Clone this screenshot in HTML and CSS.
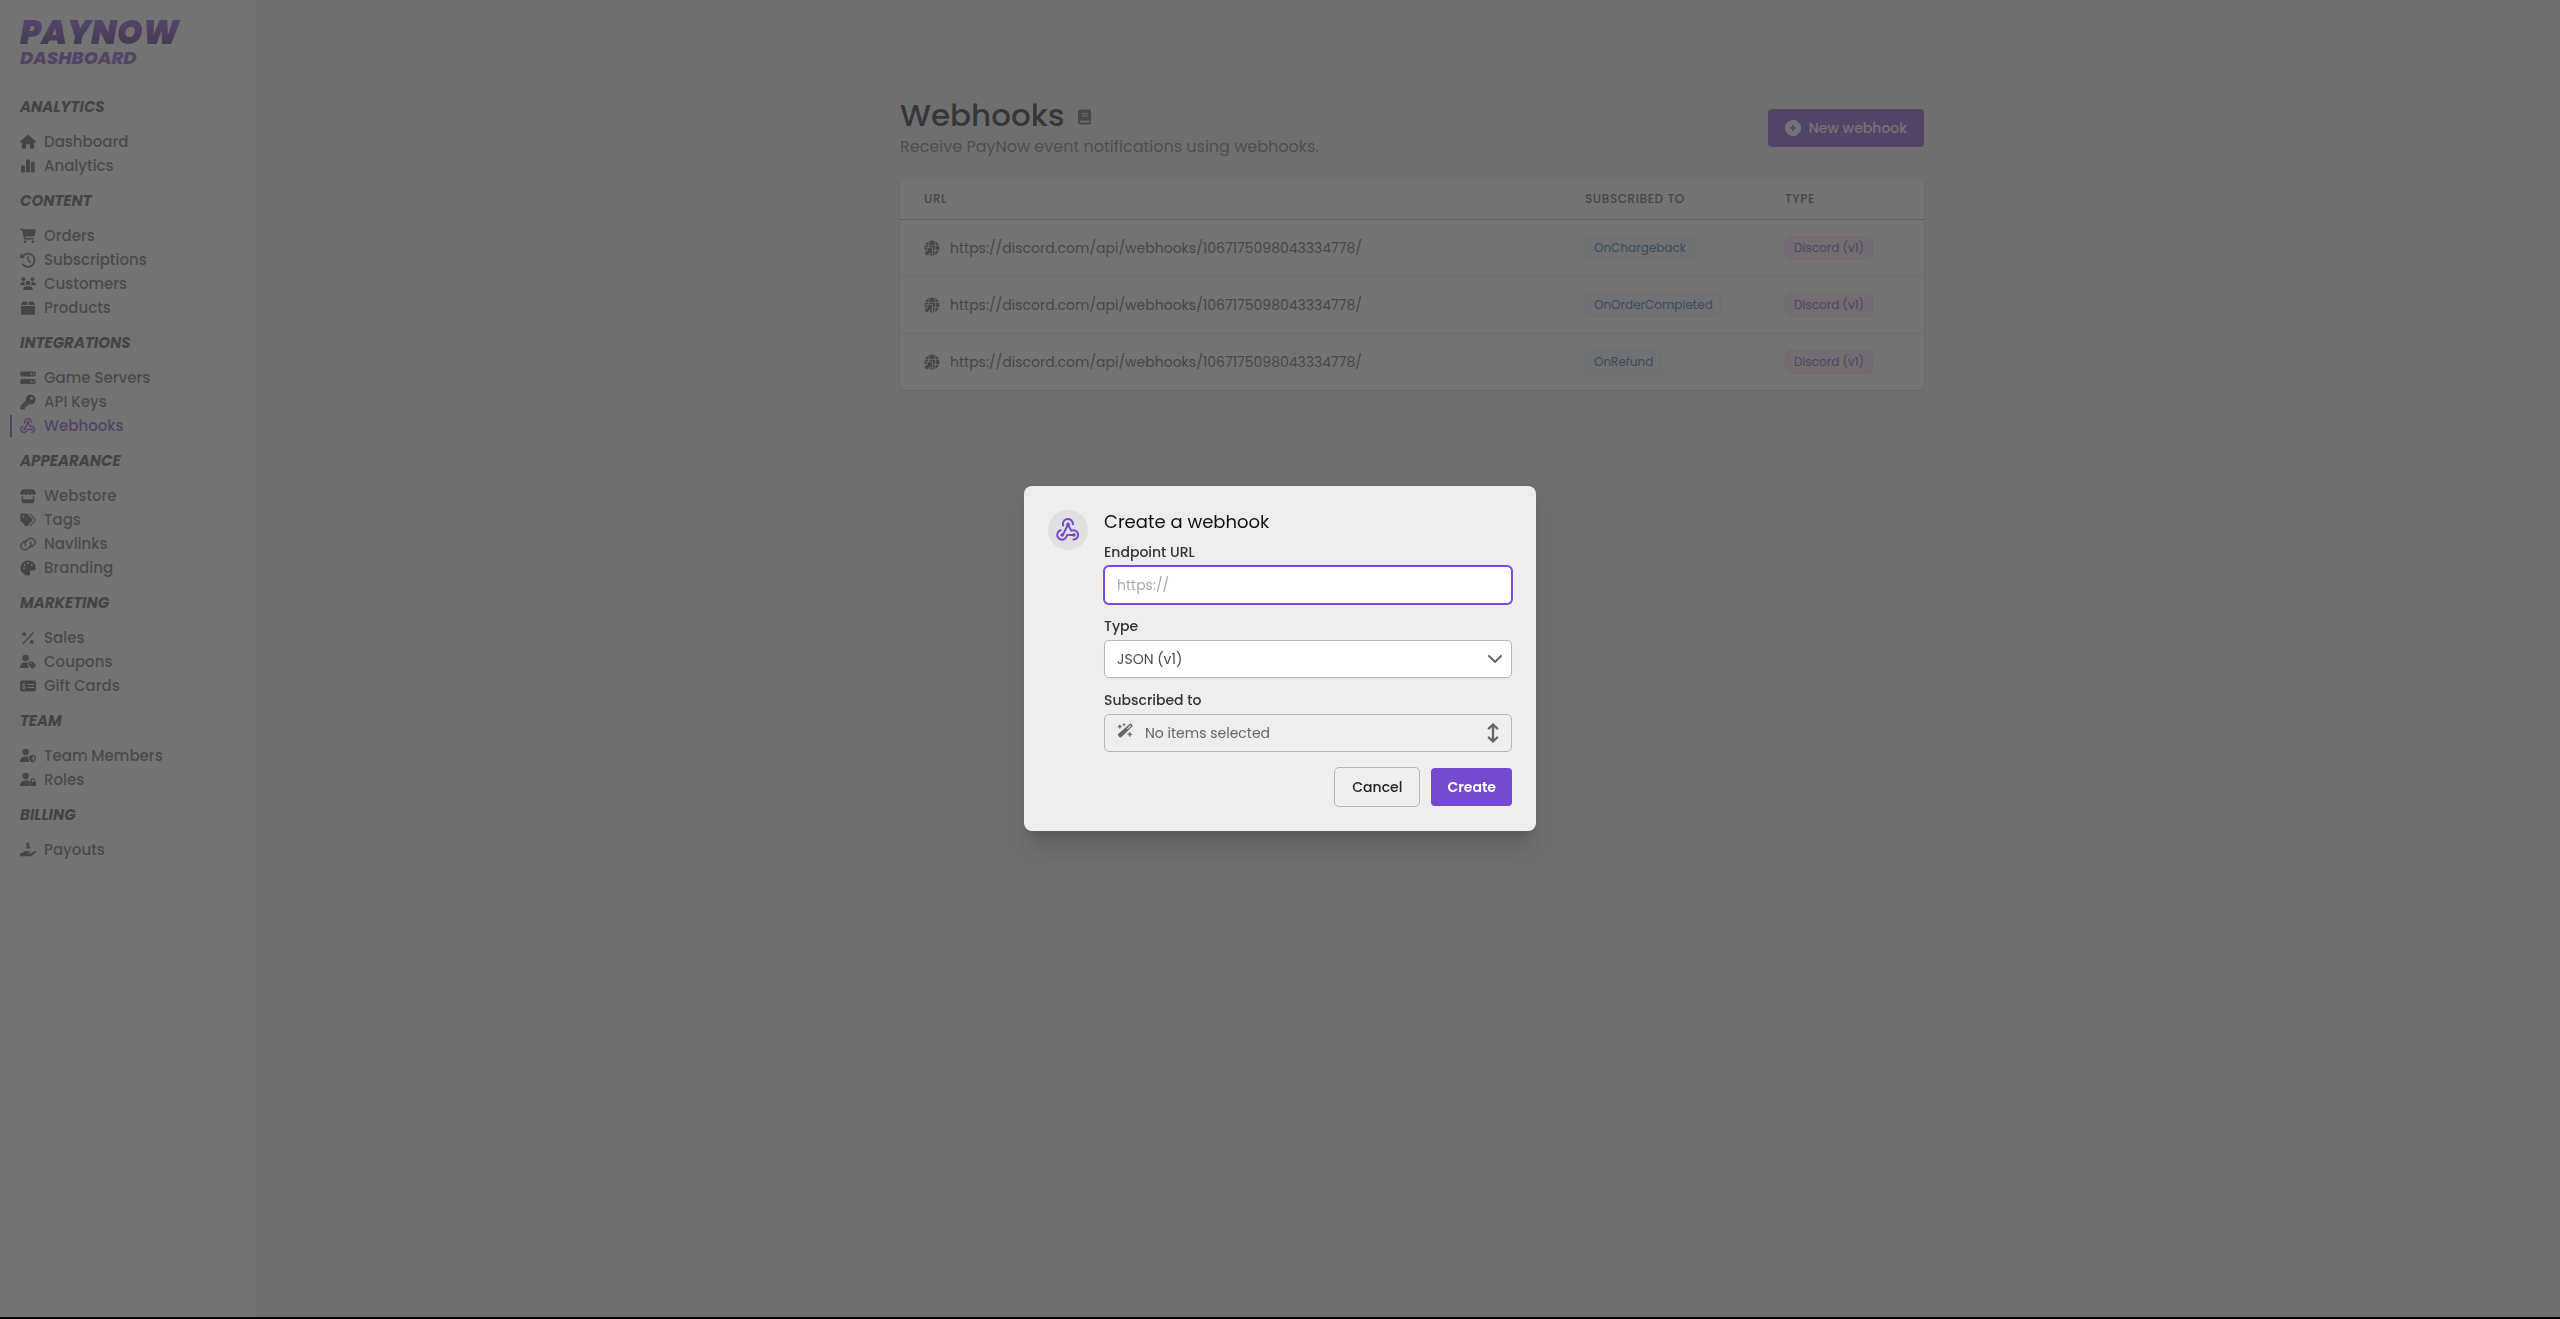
FILE: index.html
```html
<!DOCTYPE html>
<html lang="en">
<head>
<meta charset="utf-8">
<title>Webhooks - PayNow Dashboard</title>
<link rel="stylesheet" href="styles.css">
</head>
<body>
<svg class="sprite" aria-hidden="true">
  <symbol id="home" viewBox="0 0 16 16"><path d="M8 0.4 0 7.6c-.2.6.2 1 .8 1h1.1v5c0 .7.5 1.200 1.200 1.200H5.200c.6 0 1-.4 1-1v-2.600c0-.6.4-1 1-1h1.600c.6 0 1 .4 1 1v2.600c0 .6.4 1 1 1h2.100c.7 0 1.200-.5 1.200-1.200v-5h1.100c.6 0 1-.4.8-1z"/></symbol>
  <symbol id="bars" viewBox="0 0 16 16"><rect x="1" y="7.500" width="4" height="7" rx="1.300"/><rect x="6" y="1.500" width="4" height="13" rx="1.300"/><rect x="11" y="3.500" width="3.600" height="11" rx="1.300"/></symbol>
  <symbol id="cart" viewBox="0 0 16 16"><path d="M0 1.200C0 .8.300.5.700.5h1.600c.6 0 1 .4 1.100.8H15c.7 0 1 .5.9 1.100l-1.400 5c-.2.7-.7 1.200-1.500 1.200H5l.3 1.400h8.500v1.400H4.800c-.4 0-.7-.3-.8-.6L2.200 1.900H.7C.3 1.900 0 1.600 0 1.200z"/><circle cx="5" cy="13.700" r="1.300"/><circle cx="13" cy="13.700" r="1.300"/></symbol>
  <symbol id="history" viewBox="0 0 16 16"><path d="M2.500 4.500A6.600 6.600 0 1 1 3 12.600" fill="none" stroke="currentColor" stroke-width="1.700" stroke-linecap="round"/><path d="M.3 1.300v4c0 .4.300.700.700.700h4z"/><path d="M8 4.500V8l2.300 2.300" fill="none" stroke="currentColor" stroke-width="1.400" stroke-linecap="round"/></symbol>
  <symbol id="users" viewBox="0 0 16 16"><circle cx="3.400" cy="3.200" r="1.900"/><circle cx="12.600" cy="3.200" r="1.900"/><circle cx="8" cy="7" r="2.300"/><path d="M0 9.200C0 7.400 1.300 6 3 6h1.600c-.3 1.200 0 2.400.7 3.200zM16 9.200C16 7.400 14.700 6 13 6h-1.600c.3 1.200 0 2.400-.7 3.200zM3.200 14c0-2.200 1.400-3.700 3.300-3.700h3c1.900 0 3.300 1.500 3.300 3.700z"/></symbol>
  <symbol id="box" viewBox="0 0 16 16"><path d="M3.600 1.500h3.700V5H1.200l1-2.600c.2-.6.800-.9 1.400-.9zm5.100 0h3.700c.6 0 1.200.3 1.400.9l1 2.600H8.700zM1 6h14v7c0 1-.8 1.700-1.700 1.700H2.700C1.800 14.700 1 14 1 13z"/></symbol>
  <symbol id="server" viewBox="0 0 16 16"><path fill-rule="evenodd" d="M2 1.500h12c1 0 1.800.8 1.800 1.700v1.600c0 1-.8 1.700-1.800 1.700H2C1 6.500.2 5.800.2 4.800V3.200C.2 2.300 1 1.500 2 1.500zm8.500 1.700v1.500H12V3.200zm2.500 0v1.500h1.500V3.200zM2 9h12c1 0 1.800.8 1.800 1.700v1.600c0 1-.8 1.700-1.800 1.700H2c-1 0-1.800-.7-1.800-1.700v-1.600C.2 9.800 1 9 2 9zm8.500 1.700v1.500H12v-1.500zm2.500 0v1.500h1.500v-1.500z"/></symbol>
  <symbol id="key" viewBox="0 0 16 16"><path fill-rule="evenodd" d="M10.500.5a5 5 0 1 1-1.400 9.800L7.900 11.500H6.400V13H4.900v1.700c0 .4-.3.700-.7.700H1c-.4 0-.7-.3-.7-.7v-2.600l5.600-5.600A5 5 0 0 1 10.500.5zm1.200 2.500a1.400 1.400 0 1 0 0 2.800 1.400 1.400 0 0 0 0-2.800z"/></symbol>
  <symbol id="hook" viewBox="0 0 24 24"><g fill="none" stroke="currentColor" stroke-width="2" stroke-linecap="round" stroke-linejoin="round"><path d="M7.200 7.600A5 5 0 1 1 16.900 6.200M12 6.500l3.300 6.200a4.700 4.700 0 1 1 2.200 8.900M12 6.500l-4.900 10"/><path d="M4.600 12.300A4.800 4.800 0 1 0 10.600 18.300L11 17h7"/></g><circle cx="12" cy="6.200" r="1.800"/><circle cx="6.200" cy="17" r="1.800"/><circle cx="18" cy="17" r="1.800"/></symbol>
  <symbol id="store" viewBox="0 0 16 16"><path d="M2.600 1.200h10.800L15.600 4c.8 1.300 0 3-1.700 3-.8 0-1.500-.4-2-.9-1 1.200-2.900 1.200-3.900 0-1 1.200-2.900 1.200-3.900 0-.5.5-1.200.9-2 .9C.4 7-.4 5.300.4 4z"/><path d="M1.700 8v5.500c0 .9.700 1.700 1.700 1.700h9.200c1 0 1.700-.8 1.700-1.700V8h-1.600v3.300H3.300V8z"/></symbol>
  <symbol id="tags" viewBox="0 0 16 16"><path fill-rule="evenodd" d="M.3 2.700C.3 2 .9 1.400 1.600 1.400h4.600c.5 0 .9.200 1.200.5l4.700 4.700c.7.7.7 1.700 0 2.400l-4.500 4.700c-.7.7-1.700.7-2.400 0L.8 9c-.3-.3-.5-.8-.5-1.200zM3.400 3.500a1.100 1.100 0 1 0 0 2.200 1.100 1.100 0 0 0 0-2.200z"/><path d="m10 1.900 4.500 4.400c.8.800.8 2.200 0 3L10.600 13.300" fill="none" stroke="currentColor" stroke-width="1.100" stroke-linecap="round"/></symbol>
  <symbol id="link" viewBox="0 0 16 16"><g fill="none" stroke="currentColor" stroke-width="1.400" stroke-linecap="round"><path d="M5.900 9.700c-1.200-1.200-1.200-3 0-4.200l2-2c4-3.200 9.500 1 6.300 5l-1.700 1.500c-.8.700-1.800.900-2.800.6"/><path d="M10.100 6.300c1.200 1.200 1.200 3 0 4.200l-2 2c-4 3.200-9.500-1-6.300-5L3.500 6c.8-.7 1.800-.9 2.800-.6"/></g></symbol>
  <symbol id="palette" viewBox="0 0 16 16"><path fill-rule="evenodd" d="M8 .4c4.300 0 7.700 3.200 7.700 7.500 0 1.700-1.200 2.500-2.500 2.500h-2c-1.100 0-1.700 1-1.300 2 .5 1.200.2 3.200-1.900 3.200A7.600 7.600 0 0 1 8 .4zM4 7.200a1 1 0 1 0 0 2 1 1 0 0 0 0-2zM4.800 4a1 1 0 1 0 0 2 1 1 0 0 0 0-2zM8 2.300a1 1 0 1 0 0 2 1 1 0 0 0 0-2zM11.700 4a1 1 0 1 0 0 2 1 1 0 0 0 0-2z"/></symbol>
  <symbol id="percent" viewBox="0 0 16 16"><path d="M13 3 3 13.700" stroke="currentColor" stroke-width="1.500" stroke-linecap="round"/><circle cx="4.200" cy="4.200" r="1.900"/><circle cx="11.800" cy="12" r="1.900"/></symbol>
  <symbol id="usertag" viewBox="0 0 16 16"><circle cx="5.600" cy="4" r="3.200"/><path d="M0 14c0-3.200 2.200-5.500 4.500-5.500h3.200v2.700c0 1 .5 1.800 1.500 2.800z"/><path fill-rule="evenodd" d="M8.700 7.500h3c.5 0 1 .2 1.300.5l2.500 2.500c.5.500.5 1.300 0 1.800l-2 2c-.5.500-1.300.5-1.800 0l-2.500-2.500c-.3-.3-.5-.8-.5-1.300zm1.700 1.200v1.200h1.200V8.700z"/></symbol>
  <symbol id="check" viewBox="0 0 16 16"><path fill-rule="evenodd" d="M1.700 2.500h12.600c1 0 1.700.8 1.700 1.700v7.600c0 1-.7 1.700-1.700 1.700H1.700C.7 13.500 0 12.800 0 11.800V4.200c0-.9.700-1.700 1.700-1.700zM7.500 6v1.100h6.700V6zm0 3v1.100h6.700V9z"/><path d="M5.500 6.300C4.700 5.500 2.600 5.500 2.600 7S5.500 8 5.500 9.300 3.200 10.700 2.400 9.800M4 4.500v7" fill="none" stroke="#fff" stroke-width=".9"/></symbol>
  <symbol id="usershield" viewBox="0 0 16 16"><circle cx="5.600" cy="4" r="3.200"/><path d="M0 14c0-3.200 2.200-5.500 4.500-5.500h3.600c0 2.400.4 4 1.800 5.500z"/><path fill-rule="evenodd" d="m12.500 6.800 3.400 1.300c.3 3.200-1 5.700-3.400 6.700-2.400-1-3.700-3.500-3.400-6.700zm0 1.400v5c1.400-.8 2.100-2.200 2.100-4.200z"/></symbol>
  <symbol id="userlock" viewBox="0 0 16 16"><circle cx="5.600" cy="4" r="3.200"/><path d="M0 14c0-3.200 2.200-5.500 4.500-5.500h3.200c1 0 1.800.4 2.400 1-.3.500-.5 1-.5 1.500v3z"/><path fill-rule="evenodd" d="M10.700 9.800V8.400c0-3.200 4.600-3.200 4.600 0v1.400c.4.100.7.500.7.900v2.500c0 .5-.4.900-.9.900h-4.200c-.5 0-.9-.4-.9-.9v-2.500c0-.4.300-.8.700-.9zm1.200-.1h2.200V8.300c0-1.500-2.200-1.500-2.200 0z"/></symbol>
  <symbol id="payout" viewBox="0 0 16 16"><path d="M0 11h2l1.800-1.300c.5-.3 1-.5 1.600-.5h4c1.200 0 1.200 1.600 0 1.600H7.300v.7h3.500l3.200-2.300c1.300-.9 2.700.5 1.500 1.500l-3.600 2.900c-.5.400-1 .6-1.600.6H0z"/><path d="M9.700 2.200C8.900 1.200 6.500 1.100 6.500 2.500s3.200.9 3.200 2.400-2.600 1.500-3.500.3M8 .2v6.500" fill="none" stroke="currentColor" stroke-width="1.100"/></symbol>
  <symbol id="book" viewBox="0 0 14 16"><path fill-rule="evenodd" d="M3 0h10c.6 0 1 .4 1 1v10c0 .4-.2.700-.5.900V14c.6 0 .5.500.5 1s-.4 1-1 1H3c-1.700 0-3-1.300-3-3V3c0-1.700 1.300-3 3-3zM4 4v1.100h7V4zm0 2.300v1.100h7V6.300zM3 12c-1.300 0-1.300 2 0 2h9v-2z"/></symbol>
  <symbol id="plus" viewBox="0 0 16 16"><path fill-rule="evenodd" d="M8 0a8 8 0 1 1 0 16A8 8 0 0 1 8 0zM7.200 4.900v2.300H4.900v1.600h2.300v2.300h1.600V8.800h2.300V7.200H8.800V4.900z"/></symbol>
  <symbol id="globe" viewBox="0 0 16 16"><circle cx="8" cy="8" r="7.600"/><g fill="none" stroke="#fff" stroke-width=".8"><path d="M0 5.300h16M0 10.600h16M5.800.4c-1.900 5-1.900 10.200 0 15.200M10.200.4c1.900 5 1.900 10.200 0 15.200"/></g><path d="M1.500 7.700h7v7l-2.200-2.200-3.500 3.400L0 13.400l3.800-3.500z" stroke="#fff" stroke-width=".8"/></symbol>
  <symbol id="wand" viewBox="0 0 16 16"><path fill-rule="evenodd" d="M12.700.9c.5-.5 1.200-.5 1.700 0l.8.8c.5.500.5 1.200 0 1.700L4.400 14.200c-.5.500-1.200.5-1.700 0l-1.600-1.600c-.5-.5-.5-1.200 0-1.700zm.8 1.100L9.900 5.600l.7.700 3.600-3.600z"/><path d="m2.800 1.600.6 1.500 1.500.6-1.500.6-.6 1.500-.6-1.500L.7 3.700l1.500-.6zM12.800 9l.7 1.700 1.700.7-1.700.7-.7 1.700-.7-1.700-1.700-.7 1.700-.7zM7 .3l.4 1 1 .4-1 .4-.4 1-.4-1-1-.4 1-.4z" stroke="currentColor" stroke-width=".5"/></symbol>
  <symbol id="updown" viewBox="0 0 12 20"><path d="M6 1.500v17M1.800 5.500 6 1.500l4.200 4M1.800 14.500l4.200 4 4.200-4" fill="none" stroke="currentColor" stroke-width="2.400" stroke-linecap="round" stroke-linejoin="round"/></symbol>
  <symbol id="chevron" viewBox="0 0 14 8"><path d="m1 1 6 6 6-6" fill="none" stroke="currentColor" stroke-width="2" stroke-linecap="round" stroke-linejoin="round"/></symbol>
</svg>

<div class="app">
  <aside class="sidebar">
    <a class="logo" href="#"><span class="logo-name">PAYNOW</span><span class="logo-sub">DASHBOARD</span></a>
    <nav>
      <h2>Analytics</h2>
      <ul>
        <li><a href="#"><svg class="icon"><use href="#home"/></svg>Dashboard</a></li>
        <li><a href="#"><svg class="icon"><use href="#bars"/></svg>Analytics</a></li>
      </ul>
      <h2>Content</h2>
      <ul>
        <li><a href="#"><svg class="icon"><use href="#cart"/></svg>Orders</a></li>
        <li><a href="#"><svg class="icon"><use href="#history"/></svg>Subscriptions</a></li>
        <li><a href="#"><svg class="icon"><use href="#users"/></svg>Customers</a></li>
        <li><a href="#"><svg class="icon"><use href="#box"/></svg>Products</a></li>
      </ul>
      <h2>Integrations</h2>
      <ul>
        <li><a href="#"><svg class="icon"><use href="#server"/></svg>Game Servers</a></li>
        <li><a href="#"><svg class="icon"><use href="#key"/></svg>API Keys</a></li>
        <li><a class="current" href="#"><svg class="icon"><use href="#hook"/></svg>Webhooks</a></li>
      </ul>
      <h2>Appearance</h2>
      <ul>
        <li><a href="#"><svg class="icon"><use href="#store"/></svg>Webstore</a></li>
        <li><a href="#"><svg class="icon"><use href="#tags"/></svg>Tags</a></li>
        <li><a href="#"><svg class="icon"><use href="#link"/></svg>Navlinks</a></li>
        <li><a href="#"><svg class="icon"><use href="#palette"/></svg>Branding</a></li>
      </ul>
      <h2>Marketing</h2>
      <ul>
        <li><a href="#"><svg class="icon"><use href="#percent"/></svg>Sales</a></li>
        <li><a href="#"><svg class="icon"><use href="#usertag"/></svg>Coupons</a></li>
        <li><a href="#"><svg class="icon"><use href="#check"/></svg>Gift Cards</a></li>
      </ul>
      <h2>Team</h2>
      <ul>
        <li><a href="#"><svg class="icon"><use href="#usershield"/></svg>Team Members</a></li>
        <li><a href="#"><svg class="icon"><use href="#userlock"/></svg>Roles</a></li>
      </ul>
      <h2>Billing</h2>
      <ul>
        <li><a href="#"><svg class="icon"><use href="#payout"/></svg>Payouts</a></li>
      </ul>
    </nav>
  </aside>
  <div class="page">
    <header class="topbar"></header>
    <main class="content">
      <div class="heading">
        <div class="heading-text">
          <h1>Webhooks <a href="#" aria-label="Documentation"><svg class="book"><use href="#book"/></svg></a></h1>
          <p>Receive PayNow event notifications using webhooks.</p>
        </div>
        <button class="button primary" type="button"><svg class="icon"><use href="#plus"/></svg>New webhook</button>
      </div>
      <div class="card">
        <table>
          <thead><tr><th class="col-url">URL</th><th class="col-events">Subscribed to</th><th>Type</th></tr></thead>
          <tbody>
            <tr><td><span class="url"><svg class="icon"><use href="#globe"/></svg>https://discord.com/api/webhooks/1067175098043334778/</span></td><td><span class="badge event">OnChargeback</span></td><td><span class="badge type">Discord (v1)</span></td></tr>
            <tr><td><span class="url"><svg class="icon"><use href="#globe"/></svg>https://discord.com/api/webhooks/1067175098043334778/</span></td><td><span class="badge event">OnOrderCompleted</span></td><td><span class="badge type">Discord (v1)</span></td></tr>
            <tr><td><span class="url"><svg class="icon"><use href="#globe"/></svg>https://discord.com/api/webhooks/1067175098043334778/</span></td><td><span class="badge event">OnRefund</span></td><td><span class="badge type">Discord (v1)</span></td></tr>
          </tbody>
        </table>
      </div>
    </main>
  </div>
</div>

<div class="backdrop">
  <div class="dialog" role="dialog" aria-modal="true" aria-labelledby="dialog-title">
    <div class="dialog-icon"><svg><use href="#hook"/></svg></div>
    <form class="dialog-form">
      <h3 id="dialog-title">Create a webhook</h3>
      <label class="first" for="endpoint">Endpoint URL</label>
      <input class="field focused" id="endpoint" type="text" placeholder="https://">
      <label for="type">Type</label>
      <div class="select">
        <select class="field" id="type"><option>JSON (v1)</option></select>
        <svg class="chevron"><use href="#chevron"/></svg>
      </div>
      <label for="events">Subscribed to</label>
      <button class="field picker" id="events" type="button"><svg class="icon"><use href="#wand"/></svg><span>No items selected</span><svg class="updown"><use href="#updown"/></svg></button>
      <div class="actions">
        <button class="button outline" type="button">Cancel</button>
        <button class="button primary strong" type="submit">Create</button>
      </div>
    </form>
  </div>
</div>
</body>
</html>
```
FILE: styles.css
```css
* { box-sizing: border-box; }

:root {
  --purple: #744ad0;
  --text: #4c4c4c;
  --muted: #666;
}

body {
  margin: 0;
  background: #000;
  color: var(--text);
  font-family: Poppins, Inter, "Open Sans", sans-serif;
  font-size: 15px;
  line-height: 24px;
}

svg { display: block; fill: currentColor; flex: none; }
.sprite { display: none; }
.icon { width: 16px; height: 16px; }
h1, h2, h3, p, ul { margin: 0; padding: 0; font-weight: 400; }
ul { list-style: none; }
a { color: inherit; text-decoration: none; }
button, input, select { font: inherit; color: inherit; margin: 0; }

.app {
  display: flex;
  min-height: calc(100vh - 2px);
  margin-bottom: 2px;
  background: #eee;
}

/* Sidebar */
.sidebar {
  width: 256px;
  padding: 16px 20px;
  background: #fff;
}
.logo {
  display: flex;
  flex-direction: column;
  align-items: flex-start;
  margin-bottom: 26px;
  color: var(--purple);
  font-style: italic;
}
.logo-name {
  padding-right: 4px;
  font-size: 33px;
  font-weight: 900;
  line-height: 33px;
  background: linear-gradient(#744ad0 20%, #482a88 80%);
  background-clip: text;
  color: transparent;
}
.logo-sub { font-size: 18px; font-weight: 800; line-height: 18px; }
.sidebar h2 {
  margin-bottom: 10px;
  color: #454545;
  font-size: 15px;
  font-weight: 700;
  font-style: italic;
  line-height: 28px;
  text-transform: uppercase;
}
.sidebar ul { display: grid; gap: 2px; margin-bottom: 10px; }
.sidebar li a {
  display: flex;
  align-items: center;
  gap: 8px;
  height: 22px;
  margin-left: -10px;
  padding-left: 8px;
  border-left: 2px solid transparent;
  font-weight: 500;
  color: #5c5c5c;
}
.sidebar li a.current { color: var(--purple); border-color: var(--purple); }
.sidebar li .icon { color: #4a4a4a; }
.sidebar li .current .icon { color: inherit; }

/* Page */
.page { flex: 1; display: flex; flex-direction: column; }
.topbar { height: 65px; border-bottom: 1px solid #e5e5e5; }
.content { width: 100%; max-width: 1032px; margin: 30px auto 0; padding-left: 8px; }
.heading {
  display: flex;
  align-items: center;
  justify-content: space-between;
  margin-bottom: 18px;
}
.heading-text { padding-bottom: 2px; }
h1 {
  display: flex;
  align-items: center;
  gap: 13px;
  color: #0c0c0c;
  font-size: 31px;
  font-weight: 500;
  line-height: 40px;
}
h1 a { margin-top: 4px; color: #545454; }
.book { width: 13px; height: 16px; }
.heading p { font-size: 16px; color: #6c6c6c; }

.button {
  display: flex;
  align-items: center;
  gap: 8px;
  height: 38px;
  padding: 0 17px;
  border: 0;
  border-radius: 4px;
  font-size: 14px;
  font-weight: 500;
}
.primary { background: var(--purple); color: #fff; }
.strong { padding: 0 16px; font-weight: 600; }
.outline { height: 40px; background: transparent; border: 1px solid #b5b5b5; color: #222; border-radius: 5px; }

.card {
  overflow: hidden;
  background: #fff;
  border-radius: 6px;
  box-shadow: 0 1px 2px rgba(0, 0, 0, .2);
}
table { width: 100%; border-collapse: collapse; table-layout: fixed; }
th {
  height: 40px;
  padding: 0 24px;
  border-bottom: 1px solid #a8a8a8;
  font-size: 12px;
  font-weight: 500;
  letter-spacing: .05em;
  text-align: left;
  text-transform: uppercase;
}
.col-url { width: 661px; }
.col-events { width: 200px; }
td { height: 57px; padding: 0 24px; border-bottom: 1px solid #dedede; }
tr:last-child td { border-bottom: 0; }
.url { display: flex; align-items: center; gap: 10px; font-size: 14px; }
.badge {
  display: inline-block;
  padding: 0 8px;
  border: 1px solid;
  border-radius: 5px;
  font-size: 12px;
  line-height: 22px;
}
.event { background: #f4f8fb; border-color: #e4f0f8; color: #17618f; }
.type { background: #f5e6f5; border-color: #efdcf3; color: #7b3fb5; }

/* Dialog */
.backdrop {
  position: fixed;
  inset: 0 0 2px;
  display: flex;
  align-items: center;
  justify-content: center;
  background: rgba(68, 68, 68, .75);
}
.dialog {
  display: flex;
  gap: 16px;
  width: 512px;
  padding: 24px;
  border-radius: 8px;
  background: #eee;
  box-shadow: 0 20px 25px -5px rgba(0, 0, 0, .15), 0 8px 10px -6px rgba(0, 0, 0, .15);
}
.dialog-icon {
  display: grid;
  place-items: center;
  flex: none;
  width: 40px;
  height: 40px;
  border-radius: 50%;
  background: #e0e0e0;
  color: var(--purple);
}
.dialog-icon svg { width: 24px; height: 24px; }
.dialog-form { flex: 1; display: flex; flex-direction: column; }
h3 { color: #111; font-size: 18px; line-height: 24px; }
label { margin: 12px 0 4px; color: #333; font-size: 14px; font-weight: 500; line-height: 20px; }
.first { margin-top: 8px; }
.field {
  width: 100%;
  height: 38px;
  padding: 0 12px;
  border: 1px solid #b5b5b5;
  border-radius: 5px;
  background: #fff;
  box-shadow: 0 1px 2px rgba(0, 0, 0, .06);
  font-size: 14px;
}
.focused { border-color: #8046e0; box-shadow: 0 0 0 1px #8046e0; outline: 0; }
.field::placeholder { color: #aaa; opacity: 1; }
.select { display: grid; align-items: center; }
.select > * { grid-area: 1 / 1; }
.select select { appearance: none; }
.chevron { width: 14px; height: 8px; justify-self: end; margin-right: 10px; color: #666; pointer-events: none; }
.picker { display: flex; align-items: center; gap: 12px; background: transparent; box-shadow: none; color: var(--muted); text-align: left; }
.picker .icon { margin-bottom: 4px; }
.picker span { flex: 1; }
.updown { width: 12px; height: 20px; }
.actions { display: flex; align-items: center; justify-content: flex-end; gap: 11px; margin-top: 15px; }
```
